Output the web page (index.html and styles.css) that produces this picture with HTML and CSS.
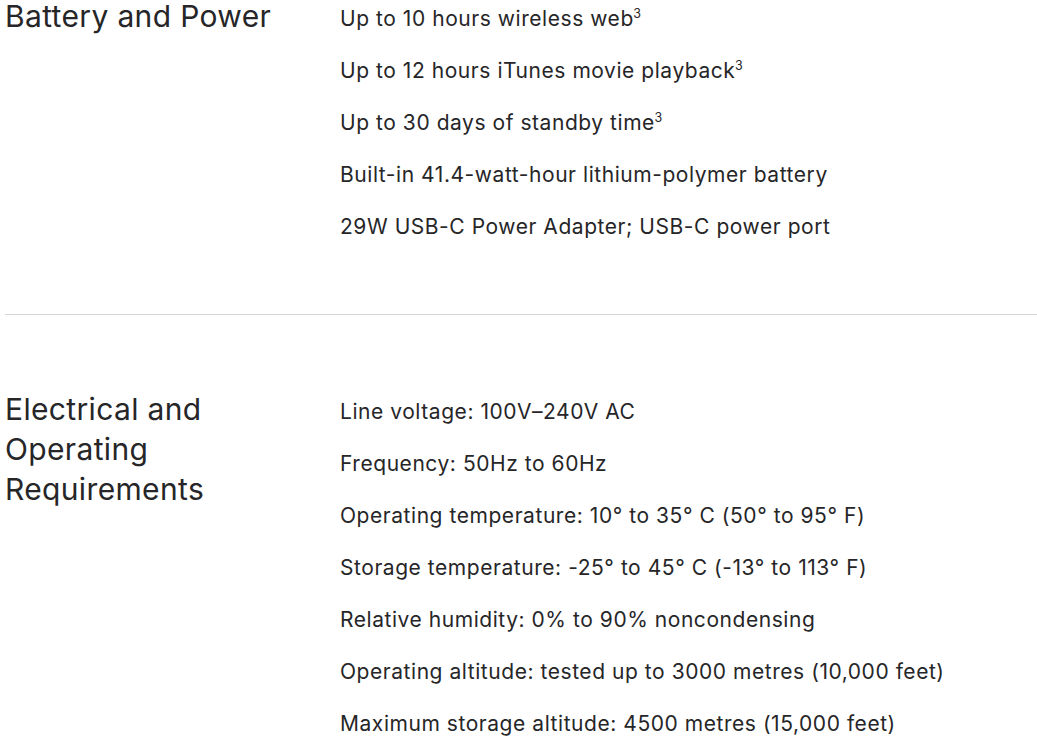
FILE: index.html
```html
<!DOCTYPE html>
<html lang="en">
<head>
<meta charset="utf-8">
<title>Tech Specs</title>
<link rel="stylesheet" href="styles.css">
</head>
<body>
<main class="specs">
  <section class="spec-section">
    <h2 class="spec-title">Battery and Power</h2>
    <ul class="spec-list">
      <li>Up to 10 hours wireless web<sup>3</sup></li>
      <li>Up to 12 hours iTunes movie playback<sup>3</sup></li>
      <li>Up to 30 days of standby time<sup>3</sup></li>
      <li>Built-in 41.4-watt-hour lithium-polymer battery</li>
      <li>29W USB-C Power Adapter; USB-C power port</li>
    </ul>
  </section>
  <section class="spec-section spec-section--divided">
    <h2 class="spec-title">Electrical and<br>Operating<br>Requirements</h2>
    <ul class="spec-list">
      <li>Line voltage: 100V–240V AC</li>
      <li>Frequency: 50Hz to 60Hz</li>
      <li>Operating temperature: 10° to 35° C (50° to 95° F)</li>
      <li>Storage temperature: -25° to 45° C (-13° to 113° F)</li>
      <li>Relative humidity: 0% to 90% noncondensing</li>
      <li>Operating altitude: tested up to 3000 metres (10,000 feet)</li>
      <li>Maximum storage altitude: 4500 metres (15,000 feet)</li>
    </ul>
  </section>
</main>
</body>
</html>
```
FILE: styles.css
```css
html, body {
  margin: 0;
  padding: 0;
  background: #ffffff;
}

body {
  font-family: Inter, "Noto Sans", "Liberation Sans", sans-serif;
  color: #262628;
  overflow: hidden;
}

.specs {
  margin-top: -7px;
  padding-left: 5px;
}

.spec-section {
  display: grid;
  grid-template-columns: 335px 1fr;
  padding-bottom: 61px;
}

.spec-section--divided {
  border-top: 1px solid #d6d6d6;
  padding-top: 71px;
}

.spec-title {
  margin: 0;
  padding-top: 3px;
  font-size: 30px;
  font-weight: 400;
  line-height: 40px;
  letter-spacing: 0.35px;
}

.spec-list {
  margin: 0;
  padding: 0;
  list-style: none;
  font-size: 21px;
  line-height: 52px;
  letter-spacing: 0.55px;
}

.spec-list sup {
  font-size: 12.5px;
  line-height: 0;
  vertical-align: 0.62em;
  margin-left: -0.5px;
  letter-spacing: 0;
}
```
